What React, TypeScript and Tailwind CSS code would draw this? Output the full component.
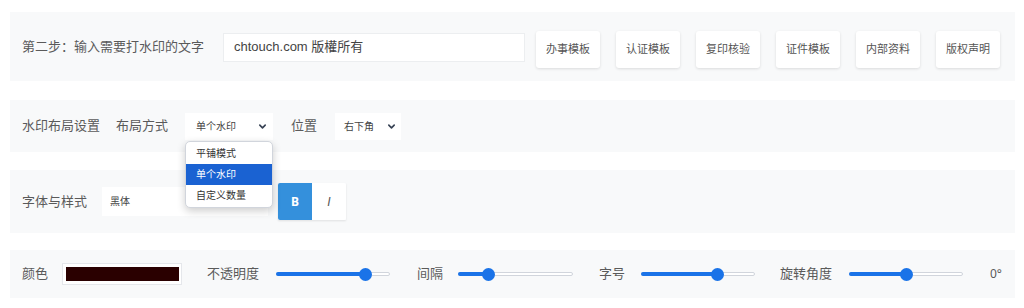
import React from "react";

const font = { fontFamily: '"Noto Sans", "Noto Sans CJK SC", sans-serif' };

const templates = ["办事模板", "认证模板", "复印核验", "证件模板", "内部资料", "版权声明"];

const Chevron = () => (
  <svg width="9" height="9" viewBox="0 0 10 10" className="text-gray-700">
    <path d="M2 3.5 L5 6.5 L8 3.5" fill="none" stroke="currentColor" strokeWidth="1.8" strokeLinecap="round" strokeLinejoin="round" />
  </svg>
);

const Slider = ({ width, pos }: { width: number; pos: number }) => (
  <div className="relative h-[14px] flex items-center" style={{ width }}>
    <div className="w-full h-[4px] rounded-full bg-white border border-gray-300" />
    <div className="absolute left-0 h-[4px] rounded-full bg-[#1a73e8]" style={{ width: pos }} />
    <div className="absolute w-[13px] h-[13px] rounded-full bg-[#1a73e8]" style={{ left: pos - 6 }} />
  </div>
);

export default function App() {
  return (
    <div className="w-[1024px] h-[308px] bg-white text-[#5a5a5a] overflow-hidden" style={font}>
      <div className="flex flex-col pl-[10px] pr-[9px] pt-[12px]">
        {/* step two */}
        <div className="h-[69px] bg-[#f8f9fa] flex items-center pl-[12px]">
          <span className="text-[13px] w-[201px]">第二步：输入需要打水印的文字</span>
          <div className="w-[302px] h-[29px] bg-white border border-[#eceef0] flex items-center px-[10px] text-[13px] text-[#444] mt-[1px] font-['Liberation_Sans','Noto_Sans_CJK_SC',sans-serif]">
            chtouch.com 版權所有
          </div>
          <div className="flex gap-[16px] ml-[11px] mt-[6px]">
            {templates.map((t) => (
              <div
                key={t}
                className="w-[64px] h-[37px] bg-white rounded-[3px] shadow-[0_1px_3px_rgba(0,0,0,0.12)] flex items-center justify-center text-[11px] text-[#555]"
              >
                {t}
              </div>
            ))}
          </div>
        </div>

        {/* layout */}
        <div className="h-[52px] bg-[#f8f9fa] flex items-center pl-[12px] mt-[19px]">
          <span className="text-[13px] w-[94px]">水印布局设置</span>
          <span className="text-[13px] w-[69px]">布局方式</span>
          <div className="relative">
            <div className="w-[88px] h-[27px] bg-white flex items-center justify-between pl-[11px] pr-[6px] text-[10px] text-[#444]">
              单个水印
              <Chevron />
            </div>
            <div className="absolute left-0 top-[28px] w-[88px] bg-white rounded-[5px] border border-gray-300 shadow-[0_3px_8px_rgba(0,0,0,0.2)] py-[1px] z-10 text-[10px] text-[#333]">
              <div className="h-[21px] flex items-center pl-[10px]">平铺模式</div>
              <div className="h-[21px] flex items-center pl-[10px] bg-[#1a62d2] text-white">单个水印</div>
              <div className="h-[21px] flex items-center pl-[10px]">自定义数量</div>
            </div>
          </div>
          <span className="text-[13px] ml-[18px] w-[44px]">位置</span>
          <div className="w-[66px] h-[27px] bg-white flex items-center justify-between pl-[9px] pr-[5px] text-[10px] text-[#444]">
            右下角
            <Chevron />
          </div>
        </div>

        {/* font */}
        <div className="h-[63px] bg-[#f8f9fa] flex items-center pl-[12px] mt-[18px]">
          <span className="text-[13px] w-[80px]">字体与样式</span>
          <div className="w-[166px] h-[29px] bg-white flex items-center pl-[8px] text-[10px] text-[#444]">黑体</div>
          <div className="flex ml-[10px] shadow-[0_1px_2px_rgba(0,0,0,0.1)]">
            <div className="w-[34px] h-[37px] bg-[#3490dc] text-white text-[12px] font-bold flex items-center justify-center rounded-l-[2px]">B</div>
            <div className="w-[34px] h-[37px] bg-white text-[#555] text-[12px] italic flex items-center justify-center rounded-r-[2px] font-['Liberation_Sans',sans-serif]">I</div>
          </div>
        </div>

        {/* color & sliders */}
        <div className="h-[48px] bg-[#f8f9fa] flex items-center pl-[12px] mt-[17px]">
          <span className="text-[13px] w-[40px]">颜色</span>
          <div className="w-[120px] h-[22px] bg-white border border-[#e5e7eb] flex items-center justify-center">
            <div className="w-[113px] h-[14px] bg-[#2a0000]" />
          </div>
          <span className="text-[13px] ml-[25px] w-[69px]">不透明度</span>
          <Slider width={114} pos={89} />
          <span className="text-[13px] ml-[27px] w-[41px]">间隔</span>
          <Slider width={115} pos={30} />
          <span className="text-[13px] ml-[26px] w-[42px]">字号</span>
          <Slider width={114} pos={76} />
          <span className="text-[13px] ml-[25px] w-[69px]">旋转角度</span>
          <Slider width={114} pos={57} />
          <span className="text-[12px] ml-[27px]">0°</span>
        </div>
      </div>
    </div>
  );
}
